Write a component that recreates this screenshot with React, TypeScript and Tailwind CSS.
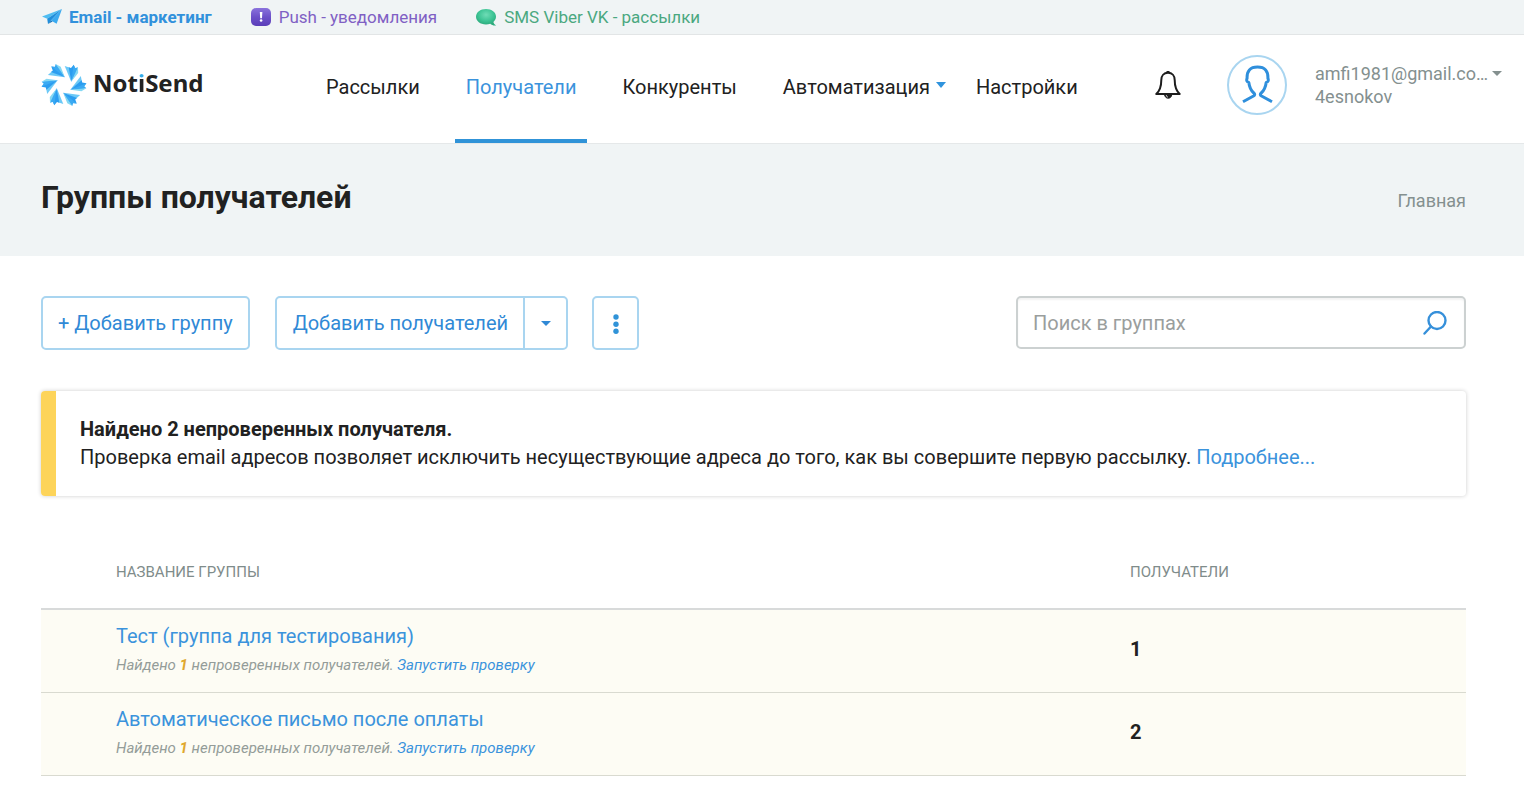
import React from "react";

const groups = [
  { name: "Тест (группа для тестирования)", unchecked: 1, total: 1 },
  { name: "Автоматическое письмо после оплаты", unchecked: 1, total: 2 },
];

const navItems = [
  { label: "Рассылки" },
  { label: "Получатели", active: true },
  { label: "Конкуренты" },
  { label: "Автоматизация", menu: true },
  { label: "Настройки" },
];

function Caret({ className }: { className: string }) {
  return (
    <svg viewBox="0 0 10 6" preserveAspectRatio="none" className={className} fill="currentColor" aria-hidden="true">
      <path d="M0 0h10L5 6z" />
    </svg>
  );
}

function PlaneIcon() {
  return (
    <svg viewBox="0 0 20 16" className="h-4 w-5" aria-hidden="true">
      <path d="M20 0 0 7.5l5.2 2.2z" fill="#4fbdf2" />
      <path d="M20 0 5.2 9.7l.8 5.3 3-3.4z" fill="#1f8edb" />
      <path d="M20 0 9 11.6l5.6 3.2z" fill="#3aaaf0" />
      <path d="m6 15 3-3.4 1.6.9z" fill="#1673bb" />
    </svg>
  );
}

function PushIcon() {
  return (
    <svg viewBox="0 0 20 18" className="h-[18px] w-5" aria-hidden="true">
      <defs>
        <linearGradient id="push" x1="0" y1="0" x2="0" y2="1">
          <stop offset="0" stopColor="#8a72dc" />
          <stop offset="0.5" stopColor="#6c50c9" />
          <stop offset="1" stopColor="#5a3db8" />
        </linearGradient>
      </defs>
      <rect width="20" height="18" rx="5" fill="url(#push)" />
      <path d="M8.8 4h2.6l-.4 6.2H9.2z" fill="#fff" />
      <circle cx="10.1" cy="12.5" r="1.3" fill="#fff" />
    </svg>
  );
}

function BubbleIcon() {
  return (
    <svg viewBox="0 0 21 17" className="h-[17px] w-[21px]" aria-hidden="true">
      <defs>
        <radialGradient id="bubble" cx="0.5" cy="0.35" r="0.6">
          <stop offset="0" stopColor="#6fdcb6" />
          <stop offset="0.6" stopColor="#3fc596" />
          <stop offset="1" stopColor="#2cab7d" />
        </radialGradient>
      </defs>
      <path
        d="M10 0c5.700 0 10 3.300 10 7.600 0 2.300-1 4.100-2.600 5.400.3 1.500 1.200 2.600 2.800 3.500-2.400.3-4.500-.3-6-1.700-1.300.4-2.700.6-4.200.6C4.300 15.400 0 12 0 7.700S4.300 0 10 0z"
        fill="url(#bubble)"
      />
    </svg>
  );
}

function LogoMark() {
  return (
    <svg viewBox="-24 -24 48 48" className="size-12" aria-hidden="true">
      {[0, 60, 120, 180, 240, 300].map((angle) => (
        <g key={angle} transform={`rotate(${angle})`}>
          <path d="M7.200-3.200.7-19l5.300 1.800z" fill="#6cc9f7" />
          <path d="M7.200-3.200 4.700-17.700l2.300.7L9.700-20.300l1.500 4z" fill="#2b9df0" />
          <path d="M7.200-3.200 9.700-20.300l1.500 3.300 2.800-.7-1.800 6z" fill="#3aaaf3" />
          <path d="M7.200-3.200 14-17.700l.2 5.700z" fill="#84d8f3" />
        </g>
      ))}
    </svg>
  );
}

function BellIcon() {
  return (
    <svg viewBox="0 0 26 28" className="h-7 w-[26px]" fill="none" stroke="#1d1d1d" strokeWidth="2" strokeLinejoin="round" aria-hidden="true">
      <path d="M13 1.800c-4.200 0-6.700 3-6.700 7.200 0 7-1.200 10.500-5 14h23.400c-3.800-3.500-5-7-5-14 0-4.200-2.500-7.200-6.700-7.200z" />
      <path d="M13 0v2" strokeWidth="3" />
      <path d="M9.500 23.500c.4 2.300 1.600 3.700 3.700 3.700s3.300-1.400 3.600-3.700z" fill="#1d1d1d" strokeWidth="1" />
      <path d="M11.300 24.300c.2 1 .7 1.500 1.400 1.800" stroke="#fff" strokeWidth="1" />
    </svg>
  );
}

function UserIcon() {
  return (
    <svg viewBox="0 0 60 60" className="size-15" fill="none" aria-hidden="true">
      <circle cx="30" cy="30" r="29" stroke="#a9d5f0" strokeWidth="2" />
      <path
        d="M16 46.800 26.500 41c1.500-.9 1.500-2 .3-3-3-2.500-4.400-6-5-10.500-1.900-.4-2.600-2.200-1.700-4.300-.3-7.200 2.900-11.200 10.400-11.200s10.700 4 10.400 11.200c.9 2.100.2 3.900-1.700 4.300-.6 4.500-2 8-5 10.500-1.200 1-1.200 2.100.3 3L45 46.800"
        stroke="#2f8fdc"
        strokeWidth="3"
        strokeLinejoin="round"
      />
    </svg>
  );
}

export default function App() {
  return (
    <div className="min-h-screen bg-white font-['Roboto',sans-serif] text-xl text-[#212121]">
      <nav aria-label="Сервисы" className="flex h-[35px] items-center gap-[39px] border-b border-[#e2e5e6] bg-[#f0f4f5] pt-px pl-[42px] text-[17px]">
        <a href="#email" className="flex items-center gap-[7px] font-bold text-[#3191dc]">
          <PlaneIcon />
          Email - маркетинг
        </a>
        <a href="#push" className="flex items-center gap-2 text-[#8060c4]">
          <PushIcon />
          Push - уведомления
        </a>
        <a href="#sms" className="flex items-center gap-[7px] text-[#4aa880]">
          <BubbleIcon />
          SMS Viber VK - рассылки
        </a>
      </nav>

      <header className="flex h-[109px] items-stretch border-b border-[#e5e8e9] pr-[22px] pl-10">
        <a href="#home" className="flex w-[275px] items-center gap-[5px] pb-2">
          <LogoMark />
          <span className="pb-1 font-['Noto_Sans',sans-serif] text-2xl font-bold text-[#222]">
            Not
            <span className="bg-linear-to-b from-[#35ace8] from-38% to-[#222] to-38% bg-clip-text text-transparent">i</span>
            Send
          </span>
        </a>
        <nav aria-label="Основное меню" className="flex gap-6">
          {navItems.map((item) => (
            <a
              key={item.label}
              href="#nav"
              className={
                item.active
                  ? "relative flex items-center border-b-4 border-[#3093d8] px-[11px] text-[#3b93dc]"
                  : "relative flex items-center border-b-4 border-transparent px-[11px]"
              }
            >
              {item.label}
              {item.menu && <Caret className="absolute top-[47px] -right-[5px] h-[6px] w-[10px] text-[#2f93dd]" />}
            </a>
          ))}
        </nav>
        <div className="ml-auto flex items-center pb-2">
          <button type="button" aria-label="Уведомления" className="mr-[46px]">
            <BellIcon />
          </button>
          <UserIcon />
          <button type="button" className="ml-7 flex gap-1 text-left text-lg leading-[23px] text-[#84908f]">
            <span className="w-[173px] whitespace-nowrap">
              amfi1981@gmail.co…
              <br />
              4esnokov
            </span>
            <Caret className="mt-[9px] h-[5px] w-[10px]" />
          </button>
        </div>
      </header>

      <div className="flex h-28 items-center justify-between bg-[#f0f4f5] pr-[58px] pl-[41px]">
        <h1 className="pb-[6px] text-[32px] font-bold">Группы получателей</h1>
        <a href="#main" className="pt-px text-lg text-[#84908f]">
          Главная
        </a>
      </div>

      <main className="pt-10 pr-[58px] pl-[41px]">
        <div className="flex items-start text-[#3089d6]">
          <button type="button" className="h-[54px] rounded-[5px] border-2 border-[#a9d5f0] px-[15px]">
            + Добавить группу
          </button>
          <div className="ml-[25px] flex h-[54px] rounded-[5px] border-2 border-[#a9d5f0]">
            <button type="button" className="pr-[15px] pl-4">
              Добавить получателей
            </button>
            <button type="button" aria-label="Другие способы" className="flex w-[43px] items-center justify-center border-l-2 border-[#a9d5f0]">
              <Caret className="mt-px h-[5px] w-[10px]" />
            </button>
          </div>
          <button type="button" aria-label="Ещё" className="ml-6 flex h-[54px] w-[47px] items-center justify-center rounded-[5px] border-2 border-[#a9d5f0]">
            <svg viewBox="0 0 6 20" className="mt-px h-5 w-[6px]" fill="#3093d8" aria-hidden="true">
              <circle cx="3" cy="3" r="2.700" />
              <circle cx="3" cy="10.300" r="2.700" />
              <circle cx="3" cy="17.300" r="2.700" />
            </svg>
          </button>
          <form className="ml-auto flex h-[53px] w-[450px] items-center rounded-[5px] border-2 border-[#ccd1d1] pr-[17px] pl-[15px] shadow-[inset_0_2px_2px_rgba(0,0,0,0.05)]">
            <input
              type="search"
              aria-label="Поиск в группах"
              placeholder="Поиск в группах"
              className="min-w-0 flex-1 outline-none placeholder:text-[#9a9e9d]"
            />
            <button type="submit" aria-label="Найти">
              <svg viewBox="0 0 24 24" className="size-6" fill="none" stroke="#3690da" strokeWidth="2.400" strokeLinecap="round" aria-hidden="true">
                <circle cx="14" cy="9.500" r="8.500" />
                <path d="m8 15.500-6.500 7" />
              </svg>
            </button>
          </form>
        </div>

        <section className="mt-[41px] flex overflow-hidden rounded-[4px] border-l-[15px] border-[#fdd45a] shadow-[0_0_4px_rgba(0,0,0,0.2)]">
          <div className="px-6 pt-6 pb-[25px] leading-7">
            <strong className="block font-bold">Найдено 2 непроверенных получателя.</strong>
            Проверка email адресов позволяет исключить несуществующие адреса до того, как вы совершите первую рассылку.{" "}
            <a href="#more" className="text-[#3b93dc]">
              Подробнее...
            </a>
          </div>
        </section>

        <table className="mt-10 w-full border-collapse text-left">
          <thead>
            <tr className="h-[73px] border-b-2 border-[#d8dada] text-[15px] text-[#7f8c8b] uppercase">
              <th scope="col" className="pl-[75px] font-normal">
                Название группы
              </th>
              <th scope="col" className="w-[336px] font-normal">
                Получатели
              </th>
            </tr>
          </thead>
          <tbody>
            {groups.map((group) => (
              <tr key={group.name} className="h-[83px] border-b border-[#d9dad0] bg-[#fdfcf4]">
                <td className="pl-[75px] align-middle">
                  <a href="#group" className="block leading-7 text-[#3b93dc]">
                    {group.name}
                  </a>
                  <p className="text-[15px] leading-[30px] text-[#949c99] italic">
                    Найдено <b className="text-[#e0a82e]">{group.unchecked}</b> непроверенных получателей.{" "}
                    <a href="#check" className="text-[#3b93dc]">
                      Запустить проверку
                    </a>
                  </p>
                </td>
                <td className="pb-[3px] font-bold">{group.total}</td>
              </tr>
            ))}
          </tbody>
        </table>
      </main>
    </div>
  );
}
